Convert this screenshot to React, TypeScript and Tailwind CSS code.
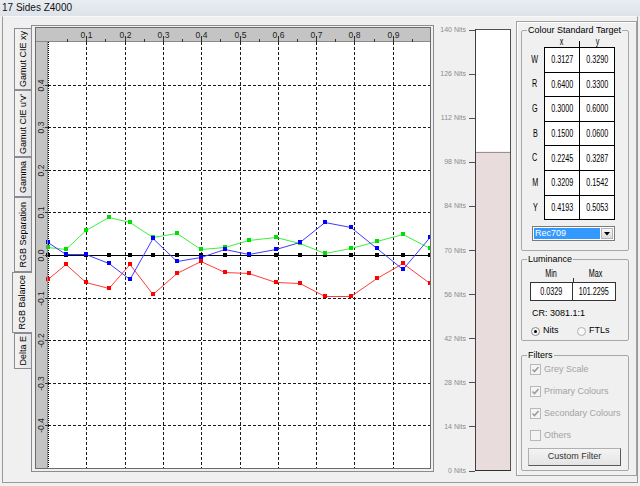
import React from "react";

const XS = [48, 66, 86, 109, 130, 153, 177, 201, 225, 249, 276, 300, 325, 351, 377, 403, 430];
const RED = [279, 264, 282, 288, 264, 294, 273, 261, 272, 273, 282, 283, 296, 296, 278, 263, 283];
const BLUE = [242, 254, 254, 263, 279, 238, 261, 257, 249, 254, 249, 242, 222, 227, 248, 269, 237];
const GREEN = [247, 249, 230, 217, 222, 237, 233, 249, 247, 240, 237, 243, 253, 248, 241, 234, 248];
const BLACK = XS.map(() => 255);

const tabs = [
  { label: "Gamut CIE xy", h: 62 },
  { label: "Gamut CIE u'v'", h: 67 },
  { label: "Gamma", h: 40 },
  { label: "RGB Separation", h: 75 },
  { label: "RGB Balance", h: 61, active: true },
  { label: "Delta E", h: 36 },
];

const targets = [
  ["W", "0.3127", "0.3290"],
  ["R", "0.6400", "0.3300"],
  ["G", "0.3000", "0.6000"],
  ["B", "0.1500", "0.0600"],
  ["C", "0.2245", "0.3287"],
  ["M", "0.3209", "0.1542"],
  ["Y", "0.4193", "0.5053"],
];

function Series({ ys, line, dot }: { ys: number[]; line: string; dot: string }) {
  const points = XS.map((x, i) => `${x - 35},${ys[i] - 27 + 0.5}`).join(" ");
  return (
    <g>
      <polyline points={points} fill="none" stroke={line} strokeWidth={1} />
      {XS.map((x, i) => (
        <rect key={i} x={x - 37} y={ys[i] - 29} width={4} height={4} fill={dot} />
      ))}
    </g>
  );
}

function Chart() {
  const px = (v: number) => Math.round(13 + v * 383) + 0.5;
  const py = (v: number) => Math.round(228 - v * 426) + 0.5;
  const cols = [1, 2, 3, 4, 5, 6, 7, 8, 9];
  const rows = [4, 3, 2, 1, -1, -2, -3, -4];
  const yLabels = [4, 3, 2, 1, 0, -1, -2, -3, -4];

  return (
    <svg width={396} height={442} className="block" fontFamily="Liberation Sans, Arial, sans-serif">
      <rect x={0} y={0} width={396} height={442} fill="#c4c4c4" />
      <rect x={13} y={15} width={383} height={426} fill="#ffffff" />

      {cols.map((k) => (
        <line key={k} x1={px(k / 10)} y1={15} x2={px(k / 10)} y2={441} stroke="#1a1a1a" strokeDasharray="3 2" />
      ))}
      {rows.map((k) => (
        <line key={k} x1={13} y1={py(k / 10)} x2={396} y2={py(k / 10)} stroke="#1a1a1a" strokeDasharray="3 2" />
      ))}
      <line x1={13.5} y1={15} x2={13.5} y2={441} stroke="#000" strokeDasharray="1 1" />
      <line x1={13} y1={228.5} x2={396} y2={228.5} stroke="#000" />

      <Series ys={BLACK} line="#000000" dot="#000000" />
      <Series ys={RED} line="#ff3c3c" dot="#ff0000" />
      <Series ys={GREEN} line="#3cf03c" dot="#00e000" />
      <Series ys={BLUE} line="#3c3cff" dot="#0000ff" />

      {/* top ruler */}
      <line x1={0} y1={14.5} x2={396} y2={14.5} stroke="#8a8a8a" />
      {cols.map((k) => (
        <g key={k}>
          <line x1={px(k / 10)} y1={9} x2={px(k / 10)} y2={15} stroke="#333" />
          <text x={px(k / 10)} y={11} fontSize={8.5} textAnchor="middle" fill="#222">
            {`0.${k}`}
          </text>
        </g>
      ))}
      {[0.5, 1.5, 2.5, 3.5, 4.5, 5.5, 6.5, 7.5, 8.5, 9.5].map((k) => (
        <line key={k} x1={px(k / 10)} y1={12} x2={px(k / 10)} y2={15} stroke="#333" />
      ))}

      {/* left ruler */}
      <line x1={12.5} y1={15} x2={12.5} y2={441} stroke="#8a8a8a" />
      {yLabels.map((k) => (
        <g key={k}>
          <line x1={10} y1={py(k / 10)} x2={13} y2={py(k / 10)} stroke="#333" />
          <text
            transform={`translate(9,${py(k / 10)}) rotate(-90)`}
            fontSize={8.5}
            textAnchor="middle"
            fill="#222"
          >
            {(k / 10).toFixed(1)}
          </text>
        </g>
      ))}

      <rect x={0.5} y={0.5} width={395} height={441} fill="none" stroke="#6b6b6b" />
    </svg>
  );
}

function NitsBar() {
  const y = (n: number) => 453.5 - n * 3.15;
  const fillTop = y(101.2295);
  const marks = [0, 14, 28, 42, 56, 70, 84, 98, 112, 126, 140];
  return (
    <svg width={82} height={460} className="block shrink-0" fontFamily="Liberation Sans, Arial, sans-serif">
      <rect x={41.5} y={12.5} width={35} height={441} fill="#ffffff" stroke="#505050" />
      <rect x={42} y={fillTop} width={34} height={453 - fillTop} fill="#e8dcdc" />
      <line x1={42} y1={Math.round(fillTop) + 0.5} x2={76} y2={Math.round(fillTop) + 0.5} stroke="#9a9090" />
      <line x1={41.5} y1={12} x2={41.5} y2={454} stroke="#404040" />
      <line x1={41} y1={453.5} x2={77} y2={453.5} stroke="#303030" />
      {marks.map((n) => (
        <g key={n}>
          <line x1={35} y1={Math.round(y(n)) + 0.5} x2={41} y2={Math.round(y(n)) + 0.5} stroke="#505050" />
          <text x={32} y={y(n) + 2.5} fontSize={7} textAnchor="end" fill="#8c8c8c">
            {`${n} Nits`}
          </text>
        </g>
      ))}
    </svg>
  );
}

function Narrow({ children }: { children: React.ReactNode }) {
  return <span className="inline-block scale-x-[0.72] whitespace-nowrap">{children}</span>;
}

function CheckBox({ label, checked }: { label: string; checked: boolean }) {
  return (
    <div className="flex h-[11px] items-center gap-[3px] pl-[8px]">
      <div className="flex h-[11px] w-[11px] items-center justify-center border border-[#b8b8b8] bg-[#f4f4f4]">
        {checked && (
          <svg width={9} height={9} viewBox="0 0 9 9">
            <path d="M1.5 4.5 L3.5 6.5 L7.5 2" fill="none" stroke="#9c9c9c" strokeWidth={1.6} />
          </svg>
        )}
      </div>
      <span className="text-[9px] leading-[11px] text-[#a3a3a3]">{label}</span>
    </div>
  );
}

export default function App() {
  return (
    <div className="flex h-[486px] w-[640px] flex-col overflow-hidden bg-[#f0f0f0] font-['Liberation_Sans',Arial,sans-serif] text-black">
      <div className="h-[16px] shrink-0 bg-gradient-to-b from-[#eaeef3] to-[#dde3ea] px-[2px] text-[10px] leading-[16px] text-[#111]">
        17 Sides Z4000
      </div>

      <div className="mx-[2px] mb-[3px] flex flex-1 items-start border border-t-[#f8f8f8] border-[#9a9a9a]">
        {/* vertical tabs */}
        <div className="flex w-[28px] shrink-0 flex-col items-end pt-[11px]">
          {tabs.map((t) =>
            t.active ? (
              <div
                key={t.label}
                style={{ height: t.h }}
                className="relative z-10 -mr-[1px] flex w-[20px] items-center justify-center border border-r-0 border-[#898c95] bg-[#f0f0f0]"
              >
                <span className="rotate-180 whitespace-nowrap text-[9px] leading-none [writing-mode:vertical-rl]">{t.label}</span>
              </div>
            ) : (
              <div
                key={t.label}
                style={{ height: t.h }}
                className="flex w-[17px] items-center justify-center overflow-hidden border border-r-0 border-[#898c95] bg-gradient-to-r from-[#f4f4f4] to-[#e3e3e3]"
              >
                <span className="rotate-180 whitespace-nowrap text-[9px] leading-none [writing-mode:vertical-rl]">{t.label}</span>
              </div>
            )
          )}
        </div>

        {/* tab page with chart */}
        <div className="mt-[8px] h-[447px] w-[403px] shrink-0 border border-[#898c95] pl-[3px] pt-[1px]">
          <Chart />
        </div>

        {/* luminance bar */}
        <NitsBar />

        {/* right panel */}
        <div className="mt-[4px] flex h-[455px] w-[121px] shrink-0 flex-col border border-[#a0a0a0] pl-[4px] pr-[7px] pt-[3px] shadow-[inset_1px_1px_0_#ffffff]">
          <fieldset className="rounded-[2px] border border-[#a8a8a8] pb-[9px]">
            <legend className="ml-[5px] px-[1px] text-[9px] leading-[11px]">Colour Standard Target</legend>
            <div className="flex h-[11px] items-end">
              <div className="w-[22px]" />
              <div className="w-[35px] text-center text-[10px] leading-[11px]">
                <Narrow>x</Narrow>
              </div>
              <div className="h-[6px] w-px bg-black" />
              <div className="w-[35px] text-center text-[10px] leading-[11px]">
                <Narrow>y</Narrow>
              </div>
            </div>
            <div className="flex flex-col">
              {targets.map(([k, x, y], i) => {
                const last = i === targets.length - 1;
                return (
                  <div key={k} className={`flex ${last ? "h-[25.6px]" : "h-[24.6px]"}`}>
                    <div className="flex w-[22px] items-center justify-center pl-[4px] text-[10px]">
                      <Narrow>{k}</Narrow>
                    </div>
                    <div
                      className={`flex w-[35px] items-center justify-center border-l border-t border-black bg-white text-[10px] ${
                        last ? "border-b" : ""
                      }`}
                    >
                      <Narrow>{x}</Narrow>
                    </div>
                    <div
                      className={`flex w-[36px] items-center justify-center border-l border-r border-t border-black bg-white text-[10px] ${
                        last ? "border-b" : ""
                      }`}
                    >
                      <Narrow>{y}</Narrow>
                    </div>
                  </div>
                );
              })}
            </div>
            <div className="ml-[10px] mt-[6px] flex h-[15px] w-[83px] border border-[#7a7a7a] bg-white p-[1px]">
              <div className="flex-1 bg-[#3399ff] pl-[1px] text-[9px] leading-[11px] text-white">Rec709</div>
              <div className="ml-[1px] flex w-[12px] items-center justify-center border border-[#b5b5b5] bg-gradient-to-b from-[#f6f6f6] to-[#dcdcdc]">
                <svg width={6} height={4} viewBox="0 0 6 4">
                  <path d="M0 0 H6 L3 3.5 Z" fill="#000" />
                </svg>
              </div>
            </div>
          </fieldset>

          <fieldset className="mt-[3px] rounded-[2px] border border-[#a8a8a8] pb-[4px]">
            <legend className="ml-[5px] px-[1px] text-[9px] leading-[11px]">Luminance</legend>
            <div className="ml-[8px] mt-[4px] flex h-[13px] w-[86px] items-start">
              <div className="w-[43px] text-center text-[10px] leading-[10px]">
                <Narrow>Min</Narrow>
              </div>
              <div className="h-[4px] w-px self-end bg-[#333]" />
              <div className="flex-1 text-center text-[10px] leading-[10px]">
                <Narrow>Max</Narrow>
              </div>
            </div>
            <div className="ml-[8px] flex h-[19px] w-[86px] border border-[#333] bg-white text-[10px]">
              <div className="flex w-[42px] items-center justify-center border-r border-[#333]">
                <Narrow>0.0329</Narrow>
              </div>
              <div className="flex flex-1 items-center justify-center">
                <Narrow>101.2295</Narrow>
              </div>
            </div>
            <div className="ml-[10px] mt-[7px] text-[9px] leading-[10px]">CR: 3081.1:1</div>
            <div className="ml-[9px] mt-[8px] flex h-[10px] items-center text-[9px]">
              <div className="flex w-[46px] items-center gap-[3px]">
                <div className="flex h-[9px] w-[9px] items-center justify-center rounded-full border border-[#8a8a8a] bg-[#f4f4f4]">
                  <div className="h-[3px] w-[3px] rounded-full bg-black" />
                </div>
                <span>Nits</span>
              </div>
              <div className="flex items-center gap-[3px]">
                <div className="h-[9px] w-[9px] rounded-full border border-[#b0b0b0] bg-[#f8f8f8]" />
                <span>FTLs</span>
              </div>
            </div>
          </fieldset>

          <fieldset className="mt-[9px] rounded-[2px] border border-[#a8a8a8] pb-[4px]">
            <legend className="ml-[5px] px-[1px] text-[9px] leading-[11px]">Filters</legend>
            <div className="mt-[3px] flex flex-col gap-[11px]">
              <CheckBox label="Grey Scale" checked />
              <CheckBox label="Primary Colours" checked />
              <CheckBox label="Secondary Colours" checked />
              <CheckBox label="Others" checked={false} />
            </div>
            <div className="ml-[6px] mt-[7px] flex h-[18px] w-[93px] items-center justify-center border border-[#b0b0b0] border-b-[#5a5a5a] border-r-[#5a5a5a] bg-gradient-to-b from-[#f4f4f4] to-[#e4e4e4] text-[9px] text-[#333]">
              Custom Filter
            </div>
          </fieldset>
        </div>
      </div>
    </div>
  );
}
